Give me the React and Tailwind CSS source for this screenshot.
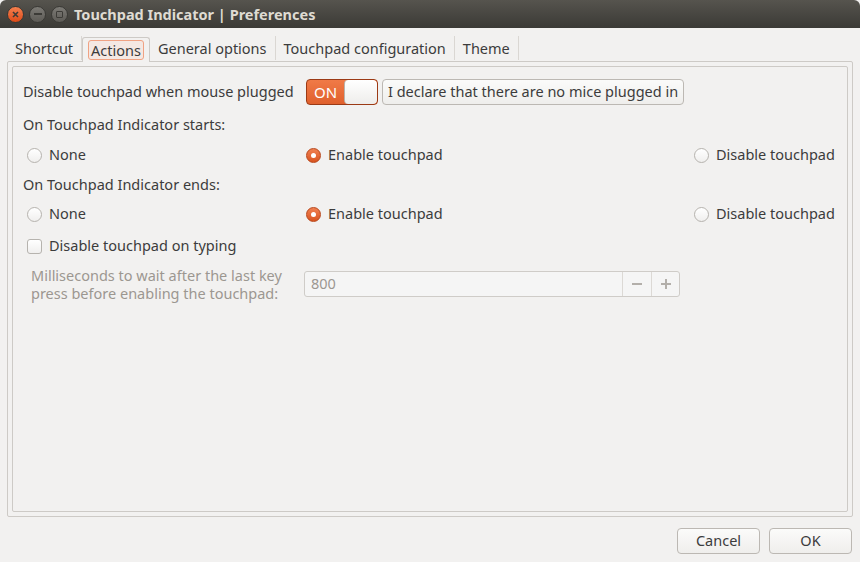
import { useState } from 'react';

const font = { fontFamily: '"Noto Sans", "Open Sans", sans-serif' };

const Radio = ({ checked, label, onClick }) => (
  <button onClick={onClick} className="flex items-center gap-[7px] text-[14.5px] text-[#3c3c3c]">
    {checked ? (
      <span className="w-[15px] h-[15px] rounded-full bg-gradient-to-b from-[#f08050] to-[#d9541e] border border-[#b8461a] flex items-center justify-center">
        <span className="w-[5px] h-[5px] rounded-full bg-white" />
      </span>
    ) : (
      <span className="w-[15px] h-[15px] rounded-full bg-gradient-to-b from-white to-[#f0efee] border border-[#b6b3ae]" />
    )}
    <span>{label}</span>
  </button>
);

const RadioRow = ({ value, onChange }) => (
  <div className="flex items-center h-[24px] pl-[4px]">
    <div className="w-[279px]">
      <Radio label="None" checked={value === 'none'} onClick={() => onChange('none')} />
    </div>
    <div className="w-[388px]">
      <Radio label="Enable touchpad" checked={value === 'enable'} onClick={() => onChange('enable')} />
    </div>
    <div>
      <Radio label="Disable touchpad" checked={value === 'disable'} onClick={() => onChange('disable')} />
    </div>
  </div>
);

const tabs = ['Shortcut', 'Actions', 'General options', 'Touchpad configuration', 'Theme'];

export default function App() {
  const [tab, setTab] = useState('Actions');
  const [on, setOn] = useState(true);
  const [starts, setStarts] = useState('enable');
  const [ends, setEnds] = useState('enable');
  const [typing, setTyping] = useState(false);

  return (
    <div style={font} className="w-[860px] h-[562px] bg-[#f2f1f0] flex flex-col overflow-hidden">
      {/* title bar */}
      <div className="h-[28px] flex items-center bg-gradient-to-b from-[#56544e] to-[#3b3a36] rounded-t-[6px] pl-[7px]">
        <div className="flex items-center gap-[5px]">
          <span className="w-[17px] h-[17px] rounded-full bg-gradient-to-b from-[#f47f4d] to-[#dd4a15] border border-[#3a3935] flex items-center justify-center">
            <svg width="7" height="7" viewBox="0 0 7 7"><path d="M1 1L6 6M6 1L1 6" stroke="#3c3b37" strokeWidth="1.6" /></svg>
          </span>
          <span className="w-[17px] h-[17px] rounded-full bg-gradient-to-b from-[#7c7a75] to-[#5d5b56] border border-[#3a3935] flex items-center justify-center">
            <span className="w-[8px] h-[2px] bg-[#3c3b37]" />
          </span>
          <span className="w-[17px] h-[17px] rounded-full bg-gradient-to-b from-[#7c7a75] to-[#5d5b56] border border-[#3a3935] flex items-center justify-center">
            <span className="w-[7px] h-[7px] border-[1.5px] border-[#3c3b37] rounded-[1px]" />
          </span>
        </div>
        <span className="ml-[6px] pt-[2px] text-[14.5px] font-bold text-[#dfdbd2]">Touchpad Indicator | Preferences</span>
      </div>

      {/* notebook */}
      <div className="flex-1 flex flex-col px-[7px] pt-[8px]">
        <div className="flex h-[25px] text-[14.5px] text-[#3c3c3c]">
          {tabs.map((t) => (
            <button
              key={t}
              onClick={() => setTab(t)}
              className={
                t === tab
                  ? 'px-[5px] border border-b-0 border-[#cdcac6] rounded-t-[3px] bg-[#f2f1f0] relative top-[1px] h-[25px] flex items-center'
                  : 'px-[8px] border-r border-[#dad7d3] h-[24px] flex items-center pt-[1px]'
              }
            >
              {t === tab ? (
                <span className="px-[2px] leading-[18px] border border-[#f0a283] rounded-[3px] bg-[#f7dccf]/40">{t}</span>
              ) : (
                t
              )}
            </button>
          ))}
        </div>
        <div className="h-[456px] border border-[#cdcac6] rounded-[2px] p-[4px]">
          <div className="h-full border border-[#cdcac6] rounded-[2px] pt-[12px] px-[10px] text-[14.5px] text-[#3c3c3c]">
            <div className="flex items-center h-[26px]">
              <span className="w-[283px]">Disable touchpad when mouse plugged</span>
              <button
                onClick={() => setOn(!on)}
                className="w-[72px] h-[26px] rounded-[4px] border border-[#9b3a15] bg-gradient-to-b from-[#f07a47] to-[#e0602c] flex items-center overflow-hidden"
              >
                <span className="w-[37px] text-white text-[15px] text-center">ON</span>
                <span className="flex-1 h-full rounded-[4px] bg-gradient-to-b from-white to-[#eeedeb] border-l border-[#b8b4ae]" />
              </button>
              <button className="ml-[4px] h-[26px] px-[5px] border border-[#bcb8b3] rounded-[4px] bg-gradient-to-b from-[#fbfbfa] to-[#efeeec] text-[14.5px] text-[#3c3c3c]">
                I declare that there are no mice plugged in
              </button>
            </div>
            <div className="mt-[8px] h-[24px] flex items-center">On Touchpad Indicator starts:</div>
            <div className="mt-[6px]">
              <RadioRow value={starts} onChange={setStarts} />
            </div>
            <div className="mt-[6px] h-[24px] flex items-center">On Touchpad Indicator ends:</div>
            <div className="mt-[5px]">
              <RadioRow value={ends} onChange={setEnds} />
            </div>
            <button onClick={() => setTyping(!typing)} className="mt-[8px] ml-[4px] flex items-center gap-[7px] h-[24px]">
              <span className="w-[15px] h-[15px] rounded-[3px] border border-[#b6b3ae] bg-gradient-to-b from-white to-[#f0efee] flex items-center justify-center text-[11px] text-[#3c3c3c]">
                {typing ? '✓' : ''}
              </span>
              <span>Disable touchpad on typing</span>
            </button>
            <div className="mt-[8px] flex items-start">
              <div className="w-[281px] pl-[8px] text-[#9c9791] leading-[18px]">
                Milliseconds to wait after the last key
                <br />
                press before enabling the touchpad:
              </div>
              <div className="mt-[5px] w-[376px] h-[26px] flex border border-[#cfccc8] rounded-[3px] bg-[#f5f5f5]">
                <span className="flex-1 pl-[6px] flex items-center text-[#9c9791]">800</span>
                <span className="w-[29px] border-l border-[#dcd9d5] flex items-center justify-center">
                  <span className="w-[10px] h-[2px] bg-[#b3afaa]" />
                </span>
                <span className="w-[28px] border-l border-[#dcd9d5] flex items-center justify-center relative">
                  <span className="w-[10px] h-[2px] bg-[#b3afaa]" />
                  <span className="absolute w-[2px] h-[10px] bg-[#b3afaa]" />
                </span>
              </div>
            </div>
          </div>
        </div>

        {/* dialog buttons */}
        <div className="flex justify-end gap-[9px] mt-[11px] pr-[1px]">
          <button className="w-[83px] h-[26px] border border-[#bcb8b3] rounded-[4px] bg-gradient-to-b from-[#fbfbfa] to-[#efeeec] text-[14.5px] text-[#3c3c3c]">
            Cancel
          </button>
          <button className="w-[83px] h-[26px] border border-[#bcb8b3] rounded-[4px] bg-gradient-to-b from-[#fbfbfa] to-[#efeeec] text-[14.5px] text-[#3c3c3c]">
            OK
          </button>
        </div>
      </div>
    </div>
  );
}
